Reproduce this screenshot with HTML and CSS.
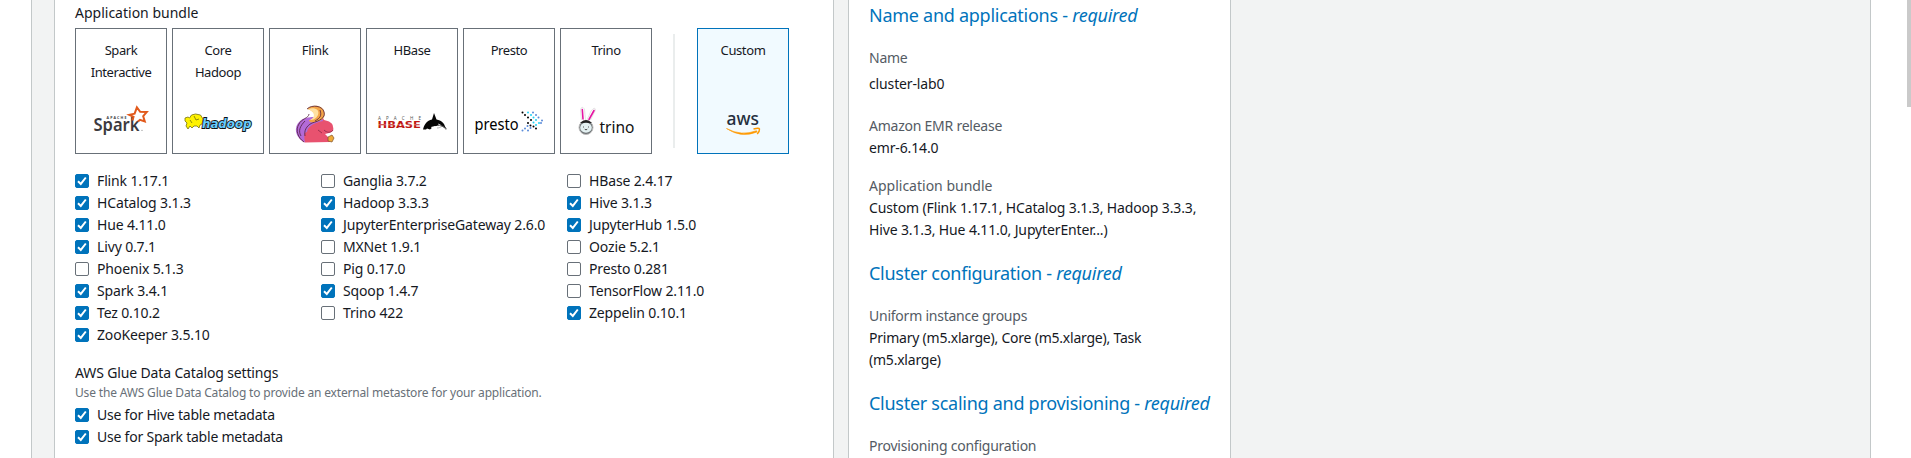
FILE: index.html
```html
<!DOCTYPE html>
<html lang="en">
<head>
<meta charset="utf-8">
<title>Create cluster</title>
<link rel="stylesheet" href="styles.css">
</head>
<body>
<div class="page">
  <main class="content">
    <section class="card form">
      <h3 class="label wide">Application bundle</h3>
      <div class="tiles">
        <div class="tile"><span>Spark Interactive</span>
          <svg class="logo" viewBox="0 0 70 42">
            <text x="20.5" y="15.6" font-size="3.600" font-weight="700" textLength="20" fill="#3c3a3e">APACHE</text>
            <text x="7.5" y="28" font-size="17.500" font-weight="600" textLength="46" lengthAdjust="spacingAndGlyphs" fill="#3c3a3e">Spark</text>
            <path d="M46.500 17.500l1-3.600-4.300-2 5.400-1.300 2.300-6.200 3.300 4.400 6.600.2-3.600 4.200 1.600 5.300-4.800-1.600-2.300 1.600" fill="none" stroke="#e25a1c" stroke-width="2"/>
            <circle cx="56" cy="27.300" r=".6" fill="#888"/>
          </svg></div>
        <div class="tile"><span>Core Hadoop</span>
          <svg class="logo" viewBox="0 0 70 42">
            <path d="M2 15l3-1 1.500 1 2-3 4-1 5 1 2.500 4-1 5-2 1-1 3-2-2-3 0-2 2-2-2-2 3-2-3 1-3-2-2z" fill="#fff200" stroke="#77720c" stroke-width=".8"/>
            <path d="M11 13l2 4 3-1M7 17l2 3" fill="none" stroke="#77720c" stroke-width=".8"/>
            <text x="19" y="24.700" font-family="DejaVu Sans" font-size="12.500" font-weight="700" font-style="italic" textLength="49.500" lengthAdjust="spacingAndGlyphs" fill="#66ccff" stroke="#111" stroke-width="1.800" paint-order="stroke">hadoop</text>
          </svg></div>
        <div class="tile"><span>Flink</span>
          <svg class="logo" viewBox="0 0 70 42">
            <path d="M25 39.500C17 36 14 25 22 19l17-4 3-2 2 4c5 1 9 3 9 7 1 3 0 5-4 6l-4 1 4 4 1 4z" fill="#e8526f"/>
            <path d="M25 39.500C15 35 13 24 20 18c3-3 9-4 14-4 5-1 9 1 9 4-9 2-15 5-16 11-3 0-3 5-2 10.500z" fill="#b36ad8"/>
            <path d="M27 6c5-5 15-4 17 2 2 5-1 9-5 10-6 2-10 2-10-1 7 0 9-8-2-11z" fill="#f3a447"/>
            <path d="M28 6c7-2 12 1 10 6-2 4-5 5-8 5 6-3 5-8-2-11z" fill="#ffe1a0"/>
            <path d="M27 6c5-5 16-3 17 3 2 6-5 9-12 11-6 3-8 8-7 13M29 11c0 4-8 5-10 10-4 6-1 14 5 18M25 18c-5 5-7 10-4 15M40 7c2 6 0 8-5 11" fill="none" stroke="#52213d" stroke-width=".8"/>
            <path d="M44 27c3 3 7 3 9 0M38 27l4 3" fill="none" stroke="#8c2946" stroke-width=".8"/>
            <path d="M48 34l4-2 2 3-2 4-4-1z" fill="#efaa37" stroke="#80512c" stroke-width=".7"/>
          </svg></div>
        <div class="tile"><span>HBase</span>
          <svg class="logo" viewBox="0 0 70 42">
            <text x="1" y="17.200" font-size="4.500" textLength="43" fill="#555">APACHE</text>
            <text x=".5" y="25" font-family="DejaVu Sans" font-size="9" font-weight="700" textLength="43.500" lengthAdjust="spacingAndGlyphs" fill="#c01712">HBASE</text>
            <path d="M1 21.800h43" stroke="#fff" stroke-width=".4"/>
            <path d="M46 26.500c1-5 4-9 9-10l2-6.500 2.500 6.500c5 1 8 4 8.500 7l2 3-5-3-4-1c-4 1-6 2-8 4l-3-1-1 1z" fill="#050505"/>
            <path d="M54 24l4-1 2 1-5 1.500zM61 20.500l4 2-3 0z" fill="#fff"/>
            <path d="M60 25c4 0 5-3 7-1l2 3" fill="none" stroke="#888" stroke-width=".6"/>
          </svg></div>
        <div class="tile"><span>Presto</span>
          <svg class="logo" viewBox="0 0 70 42">
            <text x=".5" y="27" font-size="17" textLength="44" lengthAdjust="spacingAndGlyphs" fill="#000">presto</text>
            <g fill="none" stroke-width="2" stroke-linecap="round">
              <path d="M48.500 9.500h.01M51 12h.01M54 14.500h.01M57 17h.01M54 20h.01M56.500 22.500h.01M59.500 23.500h.01M62 25.500h.01" stroke="#000"/>
              <path d="M54 9.500h.01M57 12h.01M59.500 14.500h.01M62 17h.01M65 20h.01M62 22h.01M59.500 19.500h.01" stroke="#24d2f4"/>
              <path d="M59 9.500h.01M62 12h.01M64.500 14.500h.01M68 17.500h.01M67 20h.01M56.500 25h.01M53.500 23h.01M51 25.500h.01M48.500 27.500h.01M54 27.500h.01" stroke="#5c8dda"/>
            </g>
          </svg></div>
        <div class="tile"><span>Trino</span>
          <svg class="logo" viewBox="0 0 70 42">
            <path d="M10.500 17l-1-10q1-5 4-1l1 11M16 17l4-9q4-5 4.500-1l-5 10" fill="#fff" stroke="#ddd" stroke-width=".8"/>
            <path d="M12 16l-.7-9.500M18 16.500l5-9" stroke="#e616a3" stroke-width="1.600" stroke-linecap="round"/>
            <circle cx="15" cy="24.500" r="7" fill="#6d7275" stroke="#bbb"/>
            <path d="M9 20q6-6 12 0" fill="#222"/>
            <ellipse cx="15" cy="24.800" rx="5.800" ry="5" fill="#e4f1f2"/>
            <path d="M12.500 24h.1M17.500 24h.1M14 26.500q1 1 2 0" stroke="#444" stroke-linecap="round" fill="none"/>
            <text x="28.500" y="30" font-size="17" textLength="35" lengthAdjust="spacingAndGlyphs" fill="#111">trino</text>
          </svg></div>
        <div class="divider"></div>
        <div class="tile selected"><span>Custom</span>
          <svg class="logo" viewBox="0 0 70 42">
            <text x="18.500" y="22" font-size="18" font-weight="500" textLength="32.500" lengthAdjust="spacingAndGlyphs" fill="#252f3e">aws</text>
            <path d="M18.500 25.500q15 8 30 2.200l.6 1.300q-16 6.500-30.600-3.500z" fill="#f90" stroke="#f90" stroke-width=".6"/>
            <path d="M45.500 26q5.500-1.500 6 0 .3 2-2.300 5" fill="none" stroke="#f90" stroke-width="1.400"/>
          </svg></div>
      </div>
      <div class="apps">
        <label class="check on">Flink 1.17.1</label><label class="check">Ganglia 3.7.2</label><label class="check">HBase 2.4.17</label>
        <label class="check on">HCatalog 3.1.3</label><label class="check on">Hadoop 3.3.3</label><label class="check on">Hive 3.1.3</label>
        <label class="check on">Hue 4.11.0</label><label class="check on">JupyterEnterpriseGateway 2.6.0</label><label class="check on">JupyterHub 1.5.0</label>
        <label class="check on">Livy 0.7.1</label><label class="check">MXNet 1.9.1</label><label class="check">Oozie 5.2.1</label>
        <label class="check">Phoenix 5.1.3</label><label class="check">Pig 0.17.0</label><label class="check">Presto 0.281</label>
        <label class="check on">Spark 3.4.1</label><label class="check on">Sqoop 1.4.7</label><label class="check">TensorFlow 2.11.0</label>
        <label class="check on">Tez 0.10.2</label><label class="check">Trino 422</label><label class="check on">Zeppelin 0.10.1</label>
        <label class="check on">ZooKeeper 3.5.10</label>
      </div>
      <h3 class="label">AWS Glue Data Catalog settings</h3>
      <p class="hint">Use the AWS Glue Data Catalog to provide an external metastore for your application.</p>
      <label class="check on tight">Use for Hive table metadata</label>
      <label class="check on tight">Use for Spark table metadata</label>
    </section>
    <aside class="card summary">
      <h2>Name and applications - <em>required</em></h2>
      <dl class="name"><dt>Name</dt><dd>cluster-lab0</dd></dl>
      <dl><dt>Amazon EMR release</dt><dd>emr-6.14.0</dd></dl>
      <dl><dt class="wide">Application bundle</dt><dd>Custom (Flink 1.17.1, HCatalog 3.1.3, Hadoop 3.3.3,<br>Hive 3.1.3, Hue 4.11.0, JupyterEnter...)</dd></dl>
      <h2>Cluster configuration - <em>required</em></h2>
      <dl><dt>Uniform instance groups</dt><dd class="tight">Primary (m5.xlarge), Core (m5.xlarge), Task<br>(m5.xlarge)</dd></dl>
      <h2>Cluster scaling and provisioning - <em>required</em></h2>
      <dl><dt>Provisioning configuration</dt></dl>
    </aside>
  </main>
  <div class="scrollbar"></div>
</div>
</body>
</html>
```
FILE: styles.css
```css
*, *::before { box-sizing: border-box; }
body {
  margin: 0;
  height: 458px;
  overflow: hidden;
  background: #fff;
  color: #16191f;
  font: 14px/22px "Noto Sans", "Open Sans", sans-serif;
  letter-spacing: -0.14px;
}
h2, h3, p, dl, dd { margin: 0; font-weight: 400; }
.page { display: flex; height: 458px; padding-left: 31px; }
.content {
  display: flex;
  gap: 14px;
  width: 1840px;
  padding-left: 22px;
  background: #f2f3f3;
  border: solid #c3c8c9;
  border-width: 0 1px;
}
.card { background: #fff; border: solid #c3c8c9; border-width: 0 1px; overflow: hidden; }
.form { width: 780px; padding: 2px 20px 0; }
.summary { width: 383px; padding: 4px 0 0 20px; white-space: nowrap; }
.label { font-size: 14px; line-height: 22px; }
.tiles { display: flex; gap: 5px; margin-top: 4px; }
.tile {
  display: flex;
  flex-direction: column;
  align-items: center;
  justify-content: space-between;
  flex: none;
  width: 92px;
  height: 126px;
  padding: 10px 10px 8px;
  border: 1px solid #687078;
  text-align: center;
  font-size: 13px;
  letter-spacing: -0.4px;
}
.selected { background: #f1faff; border-color: #0073bb; }
.logo { display: block; width: 70px; height: 42px; letter-spacing: 0; }
.divider { width: 2px; height: 114px; margin: 6px 17px 0 16px; background: #eaeded; }
.apps { display: grid; grid-template-columns: 246px 246px 1fr; margin: 16px 0; }
.check { display: flex; align-items: center; gap: 8px; height: 22px; white-space: nowrap; }
.check::before {
  content: "";
  width: 14px;
  height: 14px;
  border: 1px solid #687078;
  border-radius: 2px;
  background: #fff;
}
.check.on::before {
  border-color: #0073bb;
  background: url("data:image/svg+xml,%3Csvg xmlns='http://www.w3.org/2000/svg' viewBox='0 0 12 12'%3E%3Cpath d='M2 6.200l2.800 2.700L9.800 2.500' fill='none' stroke='white' stroke-width='2'/%3E%3C/svg%3E") #0073bb;
}
.hint { font-size: 12px; line-height: 16px; margin: 1px 0 3px; color: #687078; letter-spacing: -0.17px; }
h2 { font-size: 18px; line-height: 22px; color: #0073bb; letter-spacing: -0.27px; }
dl { margin-top: 16px; }
dt { color: #545b64; letter-spacing: -0.24px; }
.wide { letter-spacing: 0; }
.tight { letter-spacing: -0.22px; }
h2 + dl { margin-top: 21px; }
.name dd { margin-top: 4px; }
.name + dl { margin-top: 20px; }
dl + h2 { margin-top: 21px; }
.scrollbar { width: 4px; height: 107px; margin-left: 36px; background: #cacaca; }
```
